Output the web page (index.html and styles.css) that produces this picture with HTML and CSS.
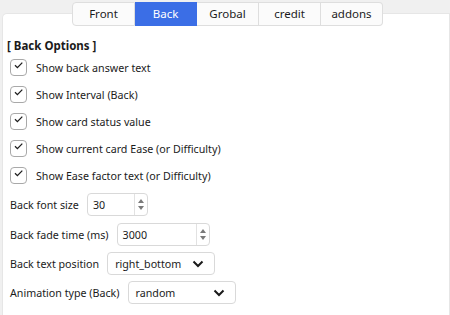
FILE: index.html
```html
<!DOCTYPE html>
<html lang="en">
<head>
  <meta charset="UTF-8">
  <title>Back Options</title>
  <link rel="stylesheet" href="styles.css">
</head>
<body>
  <!-- TABS -->
  <div class="tabs">
    <div class="tab">Front</div>
    <div class="tab active">Back</div>
    <div class="tab">Grobal</div>
    <div class="tab">credit</div>
    <div class="tab">addons</div>
  </div>

  <div class="panel">
    <div class="section-title">[ Back Options ]</div>

    <label class="check"><span class="box"><svg width="15" height="15" viewBox="0 0 15 15"><path d="M4 5.2 L6.4 7.6 L11.3 2.6" fill="none" stroke="#1e1e1e" stroke-width="1.3"/></svg></span>Show back answer text</label>
    <label class="check"><span class="box"><svg width="15" height="15" viewBox="0 0 15 15"><path d="M4 5.2 L6.4 7.6 L11.3 2.6" fill="none" stroke="#1e1e1e" stroke-width="1.3"/></svg></span>Show Interval (Back)</label>
    <label class="check"><span class="box"><svg width="15" height="15" viewBox="0 0 15 15"><path d="M4 5.2 L6.4 7.6 L11.3 2.6" fill="none" stroke="#1e1e1e" stroke-width="1.3"/></svg></span>Show card status value</label>
    <label class="check"><span class="box"><svg width="15" height="15" viewBox="0 0 15 15"><path d="M4 5.2 L6.4 7.6 L11.3 2.6" fill="none" stroke="#1e1e1e" stroke-width="1.3"/></svg></span>Show current card Ease (or Difficulty)</label>
    <label class="check"><span class="box"><svg width="15" height="15" viewBox="0 0 15 15"><path d="M4 5.2 L6.4 7.6 L11.3 2.6" fill="none" stroke="#1e1e1e" stroke-width="1.3"/></svg></span>Show Ease factor text (or Difficulty)</label>

    <div class="field first">
      <span>Back font size</span>
      <div class="spin small"><span class="val">30</span><span class="arrows"><i class="up"></i><i class="down"></i></span></div>
    </div>
    <div class="field">
      <span>Back fade time (ms)</span>
      <div class="spin wide"><span class="val">3000</span><span class="arrows"><i class="up"></i><i class="down"></i></span></div>
    </div>
    <div class="field">
      <span>Back text position</span>
      <div class="select"><span class="val">right_bottom</span>
        <svg width="12" height="8" viewBox="0 0 12 8"><path d="M1.5 1.5 L6 6 L10.5 1.5" fill="none" stroke="#1a1a1a" stroke-width="2"/></svg>
      </div>
    </div>
    <div class="field">
      <span>Animation type (Back)</span>
      <div class="select"><span class="val">random</span>
        <svg width="12" height="8" viewBox="0 0 12 8"><path d="M1.5 1.5 L6 6 L10.5 1.5" fill="none" stroke="#1a1a1a" stroke-width="2"/></svg>
      </div>
    </div>
  </div>
</body>
</html>
```

FILE: styles.css
```css
body {
  margin: 0;
  background: #f0f0f0;
  font-family: "Noto Sans", sans-serif;
  font-size: 10.7px;
  color: #1b1b1b;
  height: 315px;
  overflow: hidden;
}

.tabs {
  display: flex;
  justify-content: center;
  padding-top: 2px;
  padding-left: 5px;
  position: relative;
  z-index: 1;
}

.tab {
  width: 61px;
  height: 22px;
  line-height: 22px;
  font-size: 11.5px;
  text-align: center;
  background: #fbfbfb;
  border: 1px solid #dedede;
  border-left: none;
}

.tab:first-child {
  border-left: 1px solid #dedede;
  border-radius: 4px 0 0 4px;
}

.tab:last-child {
  border-radius: 0 4px 4px 0;
}

.tab.active {
  background: #3b6ee6;
  border-color: #3b6ee6;
  color: #ffffff;
}

.panel {
  margin: -13px 0 0 2px;
  height: 302px;
  background: #ffffff;
  border: 1px solid #e6e6e6;
  border-bottom: none;
  border-radius: 5px 0 0 0;
  padding: 24px 0 0 4px;
  box-sizing: border-box;
}

.section-title {
  font-weight: bold;
  font-size: 11.5px;
  margin-bottom: 1px;
}

.check {
  display: flex;
  align-items: center;
  height: 27px;
  padding-left: 3px;
}

.box {
  width: 15px;
  height: 15px;
  border: 1px solid #a9a9a9;
  border-radius: 4px;
  margin-right: 9px;
  display: flex;
}

.field {
  display: flex;
  align-items: center;
  gap: 8px;
  height: 29px;
  padding-left: 3px;
}

.field.first {
  height: 31px;
}

.spin,
.select {
  display: flex;
  align-items: center;
  height: 21px;
  border: 1px solid #d9d9d9;
  border-radius: 4px;
  background: #fff;
}

.spin .val {
  flex: 1;
  padding-left: 5px;
}

.spin.small { width: 59px; }
.spin.wide { width: 91px; }

.arrows {
  width: 12px;
  height: 100%;
  border-left: 1px solid #e2e2e2;
  display: flex;
  flex-direction: column;
  align-items: center;
  justify-content: center;
  gap: 3px;
}

.arrows i {
  width: 0;
  height: 0;
  border-left: 3px solid transparent;
  border-right: 3px solid transparent;
}

.arrows .up { border-bottom: 4px solid #7a7a7a; }
.arrows .down { border-top: 4px solid #7a7a7a; }

.select {
  width: 106px;
  justify-content: space-between;
}

.select .val {
  padding-left: 7px;
}

.select svg {
  margin-right: 10px;
}
```
